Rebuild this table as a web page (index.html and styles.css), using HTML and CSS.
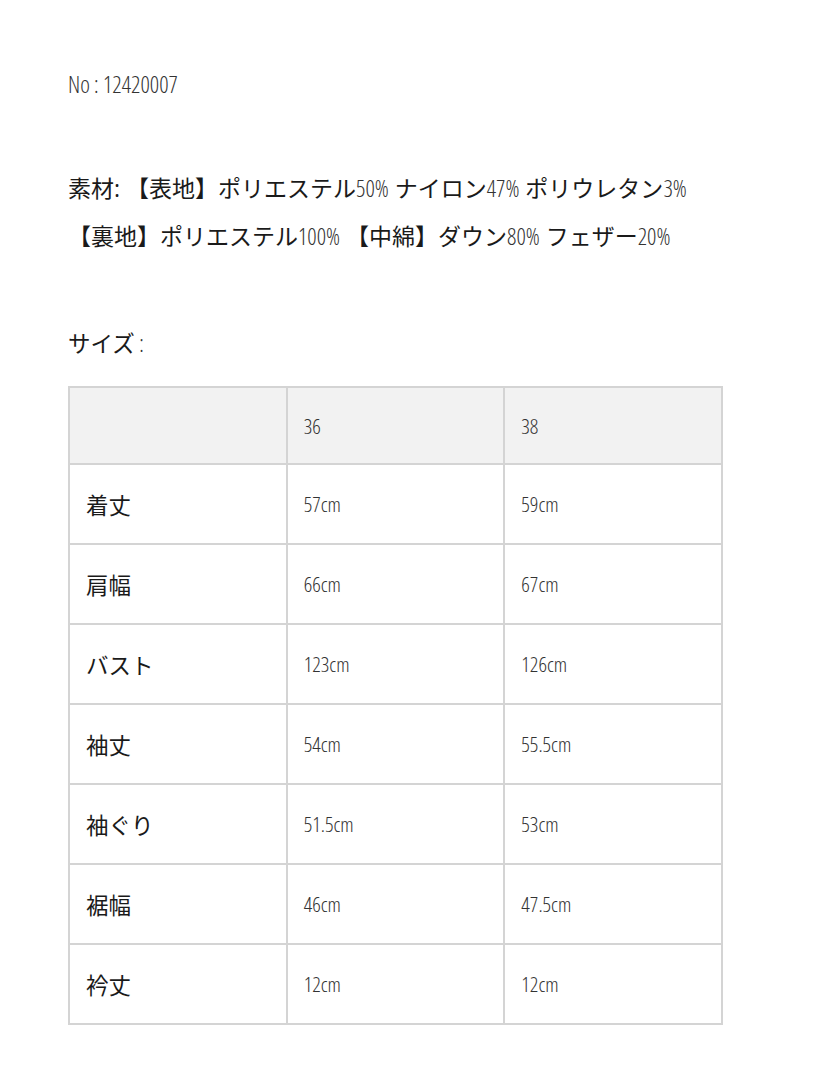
FILE: index.html
```html
<!DOCTYPE html>
<html lang="ja">
<head>
<meta charset="utf-8">
<link rel="stylesheet" href="styles.css">
</head>
<body>
<div class="page">
  <p class="no">No : 12420007</p>
  <p class="material">素材: 【表地】ポリエステル<span class="num">50%</span> ナイロン<span class="num">47%</span> ポリウレタン<span class="num">3%</span><br>【裏地】ポリエステル<span class="num">100%</span> 【中綿】ダウン<span class="num">80%</span> フェザー<span class="num">20%</span></p>
  <p class="size-label">サイズ<span class="num"> :</span></p>
  <table class="size-table">
    <thead>
      <tr><th></th><th>36</th><th>38</th></tr>
    </thead>
    <tbody>
      <tr><td class="label">着丈</td><td>57cm</td><td>59cm</td></tr>
      <tr><td class="label">肩幅</td><td>66cm</td><td>67cm</td></tr>
      <tr><td class="label">バスト</td><td>123cm</td><td>126cm</td></tr>
      <tr><td class="label">袖丈</td><td>54cm</td><td>55.5cm</td></tr>
      <tr><td class="label">袖ぐり</td><td>51.5cm</td><td>53cm</td></tr>
      <tr><td class="label">裾幅</td><td>46cm</td><td>47.5cm</td></tr>
      <tr><td class="label">衿丈</td><td>12cm</td><td>12cm</td></tr>
    </tbody>
  </table>
</div>
</body>
</html>
```
FILE: styles.css
```css
html, body {
  margin: 0;
  padding: 0;
  background: #ffffff;
}
.page {
  padding: 70px 0 0 68px;
  font-family: "Open Sans", "Noto Sans CJK JP", sans-serif;
  color: #222;
}
.num, .no, .size-table td, .size-table th {
  font-stretch: 75%;
  font-weight: 300;
}
.no {
  margin: 0;
  font-size: 23px;
  line-height: 28px;
  color: #333;
}
.material {
  margin: 66px 0 0 0;
  font-size: 23px;
  line-height: 48px;
  color: #1a1a1a;
}
.num {
  font-size: 23px;
  color: #333;
}
.size-label {
  margin: 69px 0 0 0;
  font-size: 22.5px;
  line-height: 28px;
  color: #1a1a1a;
}
.size-table {
  margin-top: 28px;
  border-collapse: collapse;
  width: 655px;
  table-layout: fixed;
}
.size-table th, .size-table td {
  border: 2px solid #d4d4d4;
  text-align: left;
  padding: 0 0 0 16px;
  font-size: 21px;
  color: #333;
  height: 78px;
}
.size-table thead th {
  background: #f2f2f2;
  height: 75px;
}
.size-table td.label {
  font-stretch: 100%;
  font-weight: 400;
  font-size: 22.5px;
  color: #1a1a1a;
}
```
